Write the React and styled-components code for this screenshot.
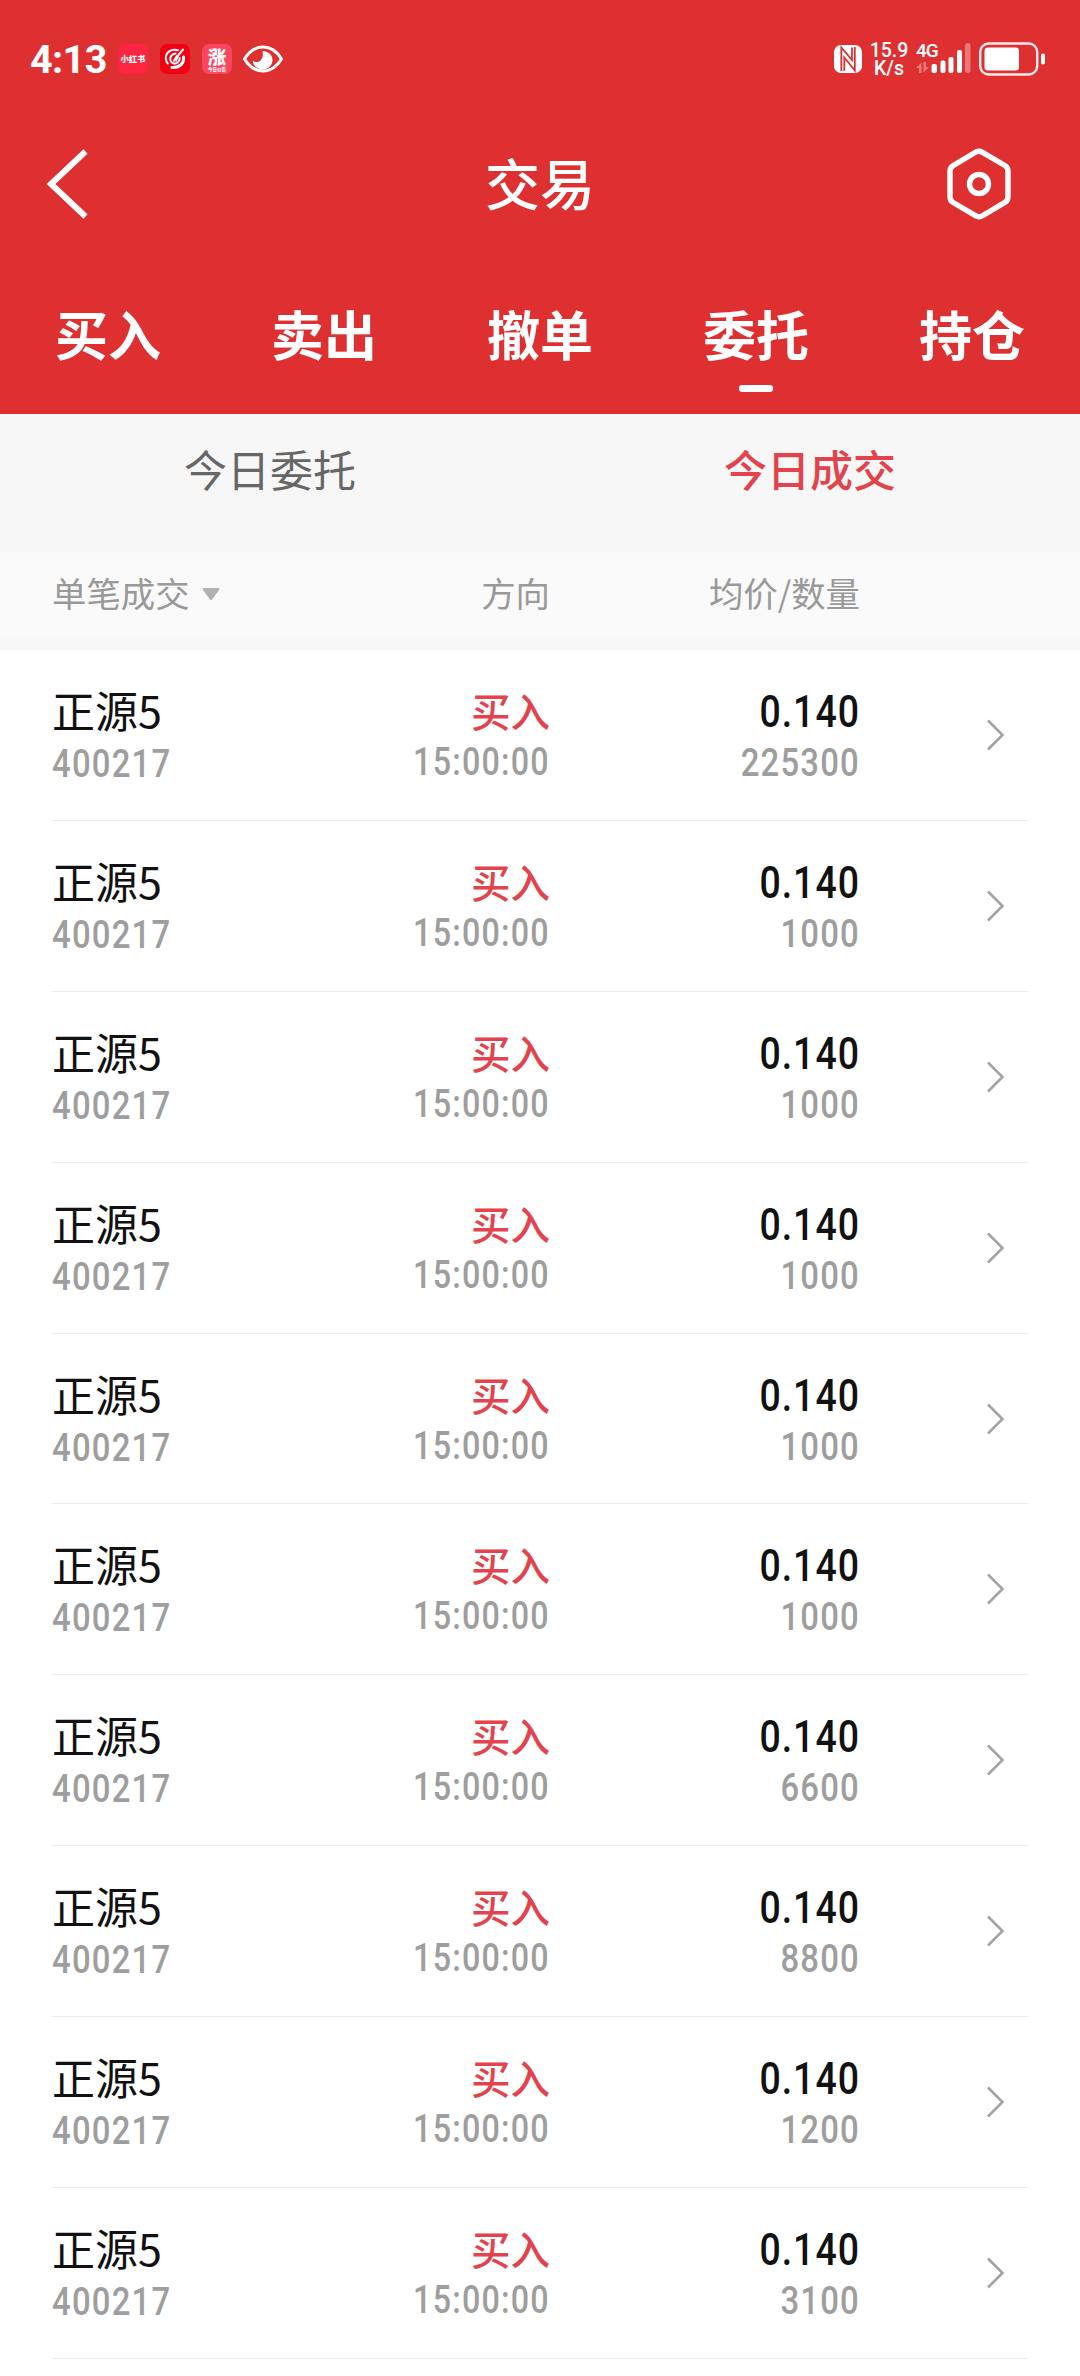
import React from 'react';
import styled, { createGlobalStyle } from 'styled-components';

const trades = [
    { amount: '225300' },
    { amount: '1000' },
    { amount: '1000' },
    { amount: '1000' },
    { amount: '1000' },
    { amount: '1000' },
    { amount: '6600' },
    { amount: '8800' },
    { amount: '1200' },
    { amount: '3100' },
];

const tabs = ['买入', '卖出', '撤单', '委托', '持仓'];

function SwirlIcon() {
    return (
        <svg width="30" height="30" viewBox="0 0 30 30" fill="none" stroke="#fff" strokeLinecap="round">
            <path d="M18 6.300C11 4.300 5.600 8.500 5.800 14.500c.1 2 .8 3.700 2 5" strokeWidth="2" />
            <path d="M23.500 13c.8 6-3.500 11-11.500 10.500" strokeWidth="3" />
            <path d="M23 5.500L14 16.500" strokeWidth="2" />
            <path d="M15.500 9.500c-4 .5-6 3.500-5 7 .8 3 4.500 4 7 2 1.500-1.200 2.300-2.800 2.300-4.500" strokeWidth="2" />
            <path d="M16.500 12l-2.500 5M18 13l-2 4" strokeWidth="1.500" />
        </svg>
    );
}

function EyeIcon() {
    return (
        <svg width="42" height="30" viewBox="0 0 42 30" fill="none">
            <path d="M2.500 15C7 7.500 13.500 3 21 3s14 4.500 18.500 12C35 22.500 28.500 27 21 27S7 22.500 2.500 15z" stroke="#fff" strokeWidth="3" strokeLinejoin="round" />
            <path d="M20.500 7c5.300 0 10 3.700 10 9s-4.500 9.500-10 9.500-9.500-4-9.700-8.700c1.500 1.200 4 1.700 5.800 1 3.500-1.300 5-6.300 3.900-10.800z" fill="#fff" />
        </svg>
    );
}

function NfcIcon() {
    return (
        <svg width="28" height="28" viewBox="0 0 28 28">
            <rect width="28" height="28" rx="7" fill="#fff" />
            <path d="M7.300 26V2.500L18 15V2.500M10.300 26V12.500L20.800 25.500V2" fill="none" stroke="#de3031" strokeWidth="1.800" />
        </svg>
    );
}

function SignalIcon() {
    return (
        <svg width="56" height="34" viewBox="0 0 56 34" fill="#fff">
            <g opacity=".35">
                <path d="M0 26l5.500-5.500V31H3v-5zM13 25l-5.500 5.500V20H10v5z" />
                <rect x="49" y="1" width="5.500" height="30" rx="2.700" />
            </g>
            <rect x="15.500" y="22" width="5.500" height="9" rx="2" />
            <rect x="24.500" y="18.500" width="5" height="12.500" rx="2" />
            <rect x="32.500" y="15" width="5" height="16" rx="2" />
            <rect x="41" y="8" width="5" height="23" rx="2" />
        </svg>
    );
}

function BatteryIcon() {
    return (
        <svg width="67" height="34" viewBox="0 0 67 34">
            <rect x="1.200" y="1.500" width="57" height="31" rx="8.500" fill="none" stroke="#fff" strokeOpacity=".9" strokeWidth="2.400" />
            <rect x="5.500" y="5.500" width="34.500" height="23" rx="3.500" fill="#fff" />
            <rect x="62" y="11.500" width="4" height="11" rx="2" fill="#fff" />
        </svg>
    );
}

export default function App() {
    return (
        <>
            <GlobalStyle />
            <Page>
                <Header>
                    <StatusBar>
                        <Clock>4:13</Clock>
                        <AppBadge $bg="#ff2442">
                            <BadgeText $size={8.3}>小红书</BadgeText>
                        </AppBadge>
                        <AppBadge $bg="#f00012">
                            <SwirlIcon />
                        </AppBadge>
                        <AppBadge $bg="#fb4560">
                            <BadgeText $size={18.5}>涨</BadgeText>
                            <BadgeText $size={4.5}>今日公告</BadgeText>
                        </AppBadge>
                        <EyeIcon />
                        <Spacer />
                        <NfcIcon />
                        <Speed>
                            <span>15.9</span>
                            <span>K/s</span>
                        </Speed>
                        <Signal>
                            <Network>4G</Network>
                            <SignalIcon />
                        </Signal>
                        <BatteryIcon />
                    </StatusBar>
                    <TitleBar>
                        <svg width="44" height="72" viewBox="0 0 44 72" fill="none">
                            <path d="M39.500 3.500L5 36l34.500 32.500" stroke="#fff" strokeWidth="6" />
                        </svg>
                        <Title>交易</Title>
                        <svg width="66" height="72" viewBox="0 0 66 72" fill="none" stroke="#fff" strokeWidth="5.400">
                            <path d="M29.500 4.300q3.500-2 7 0l22 13q3.500 2 3.500 6v25.400q0 4-3.500 6l-22 13q-3.500 2-7 0l-22-13q-3.500-2-3.500-6V23.300q0-4 3.500-6z" />
                            <circle cx="33" cy="36" r="9.500" />
                        </svg>
                    </TitleBar>
                    <Tabs>
                        {tabs.map((tab) => (
                            <Tab key={tab} $active={tab === '委托'}>{tab}</Tab>
                        ))}
                    </Tabs>
                </Header>
                <SubTabs>
                    <SubTab>今日委托</SubTab>
                    <SubTab $active>今日成交</SubTab>
                </SubTabs>
                <ListHead>
                    <HeadCell>
                        单笔成交
                        <Caret width="18" height="13" viewBox="0 0 18 13">
                            <path d="M2 0h14q2.500 0 1 2l-6.500 9q-1.500 2-3 0L1 2Q-.5 0 2 0z" fill="#b2b2b2" />
                        </Caret>
                    </HeadCell>
                    <HeadCell $right>方向</HeadCell>
                    <HeadCell $right>均价/数量</HeadCell>
                </ListHead>
                <List>
                    {trades.map((trade, i) => (
                        <Row key={i}>
                            <Cell>
                                <Name>正源5</Name>
                                <Code>400217</Code>
                            </Cell>
                            <Cell $right>
                                <Side>买入</Side>
                                <Time>15:00:00</Time>
                            </Cell>
                            <Cell $right>
                                <Price>0.140</Price>
                                <Sub>{trade.amount}</Sub>
                            </Cell>
                            <Arrow>
                                <svg width="20" height="32" viewBox="0 0 20 32" fill="none">
                                    <path d="M2 1.500L16.500 16 2 30.500" stroke="#a3a3a3" strokeWidth="2.600" />
                                </svg>
                            </Arrow>
                        </Row>
                    ))}
                </List>
            </Page>
        </>
    );
}

const GlobalStyle = createGlobalStyle`
    body {
        margin: 0;
        background: #fff;
        font-family: "Noto Sans CJK SC", sans-serif;
    }
    svg {
        display: block;
        flex-shrink: 0;
    }
`;
const Page = styled.div`
    width: 1080px;
    height: 2376px;
    overflow: hidden;
    background: #fff;
`;
const Header = styled.div`
    height: 414px;
    background: #de3031;
    color: #fff;
`;
const StatusBar = styled.div`
    display: flex;
    align-items: center;
    height: 118px;
    padding: 0 34px 0 30px;
    box-sizing: border-box;
`;
const Clock = styled.div`
    width: 88px;
    padding-top: 2px;
    font: 700 39.5px/48px Roboto, sans-serif;
    letter-spacing: -0.6px;
`;
const AppBadge = styled.div`
    display: flex;
    flex-direction: column;
    align-items: center;
    justify-content: center;
    width: 30px;
    height: 30px;
    margin-right: 12px;
    border-radius: 7px;
    background: ${(p) => p.$bg};
    & + svg {
        margin-left: -2px;
    }
`;
const BadgeText = styled.span`
    font-size: ${(p) => p.$size}px;
    line-height: 1.15;
    font-weight: 900;
    white-space: nowrap;
`;
const Spacer = styled.div`
    flex: 1;
`;
const Speed = styled.div`
    display: flex;
    flex-direction: column;
    align-items: center;
    width: 40px;
    margin: 0 7px;
    padding-top: 2px;
    font: 500 19.5px/18.5px Roboto, sans-serif;
`;
const Signal = styled.div`
    position: relative;
    margin-right: 7px;
`;
const Network = styled.span`
    position: absolute;
    left: 0;
    top: -1px;
    font: 500 19px/20px Roboto, sans-serif;
    letter-spacing: -1px;
`;
const TitleBar = styled.div`
    display: flex;
    align-items: center;
    justify-content: space-between;
    height: 132px;
    padding: 0 68px 0 46px;
`;
const Title = styled.div`
    padding: 0 0 6px 44px;
    font-size: 55px;
    font-weight: 500;
    line-height: 80px;
`;
const Tabs = styled.div`
    display: grid;
    grid-template-columns: repeat(5, 216px);
    padding-top: 43px;
`;
const Tab = styled.div`
    display: flex;
    flex-direction: column;
    align-items: center;
    font-size: 53px;
    font-weight: 700;
    line-height: 80px;
    &::after {
        content: "";
        width: 34px;
        height: 7px;
        margin-top: 12px;
        border-radius: 3px;
        background: ${(p) => (p.$active ? '#fff' : 'transparent')};
    }
`;
const SubTabs = styled.div`
    display: flex;
    height: 138px;
    background: #f7f7f7;
`;
const SubTab = styled.div`
    flex: 1;
    padding-top: 24px;
    text-align: center;
    font-size: 43px;
    line-height: 60px;
    font-weight: ${(p) => (p.$active ? 500 : 400)};
    color: ${(p) => (p.$active ? '#e2434c' : '#666')};
`;
const ListHead = styled.div`
    display: grid;
    grid-template-columns: 248px 250px 310px 1fr;
    height: 98px;
    padding: 0 52px;
    box-sizing: border-box;
    background: #fafafa;
    border-bottom: 11px solid #f7f7f7;
`;
const HeadCell = styled.div`
    display: flex;
    align-items: center;
    justify-content: ${(p) => (p.$right ? 'flex-end' : 'flex-start')};
    gap: 12px;
    height: 79px;
    font-size: 34.4px;
    color: #999;
`;
const Caret = styled.svg`
    margin-top: 6px;
`;
const List = styled.div`
    padding: 0 52px;
`;
const Row = styled.div`
    display: grid;
    grid-template-columns: 248px 250px 310px 1fr;
    height: 170.89px;
    box-sizing: border-box;
    border-bottom: 1px solid #ececec;
`;
const Cell = styled.div`
    display: flex;
    flex-direction: column;
    align-items: ${(p) => (p.$right ? 'flex-end' : 'flex-start')};
    padding-top: 29px;
`;
const Name = styled.div`
    font-size: 43px;
    line-height: 60px;
    color: #111;
`;
const Side = styled.div`
    padding-top: 1px;
    font-size: 39.5px;
    line-height: 60px;
    font-weight: 500;
    color: #e2434c;
`;
/* digits are slightly condensed */
const Sub = styled.div`
    padding-top: 3px;
    font: 500 38px/40px Roboto, sans-serif;
    letter-spacing: 1.4px;
    color: #9e9e9e;
    transform: scaleX(0.865);
    transform-origin: right;
`;
const Time = styled(Sub)`
    padding-top: 2px;
    transform: scaleX(0.85);
`;
const Code = styled(Sub)`
    padding-top: 5px;
    transform-origin: left;
`;
const Price = styled.div`
    padding-top: 4px;
    margin-bottom: -3px;
    font: 500 43.5px/60px Roboto, sans-serif;
    letter-spacing: 1.2px;
    color: #111;
    transform: scaleX(0.86);
    transform-origin: right;
`;
const Arrow = styled.div`
    padding: 69px 0 0 126px;
`;
